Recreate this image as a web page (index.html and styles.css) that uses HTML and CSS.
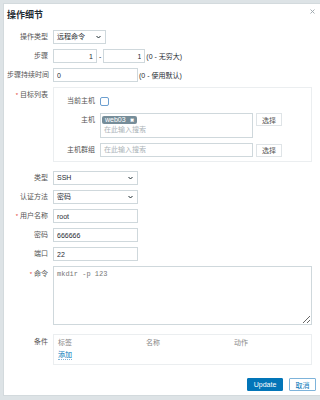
FILE: index.html
```html
<!DOCTYPE html>
<html lang="zh-CN">
<head>
    <meta charset="UTF-8">
    <meta name="viewport" content="width=device-width, initial-scale=1.0">
    <title>操作细节</title>
    <link rel="stylesheet" href="styles.css">
</head>
<body>

    <div class="dialog">
        <div class="dialog-head">
            <h4 class="dialog-title">操作细节</h4>
            <button class="btn-close" title="关闭">
                <svg width="5" height="5" viewBox="0 0 5 5"><path d="M0.5 0.5 L4.5 4.5 M4.5 0.5 L0.5 4.5" stroke="#9aa4aa" stroke-width="0.9"/></svg>
            </button>
        </div>

        <div class="form">
            <div class="row">
                <label class="label">操作类型</label>
                <div class="select w-op">远程命令
                    <svg class="chevron" width="5" height="4" viewBox="0 0 5 4"><path d="M0.5 1 L2.5 3 L4.5 1" fill="none" stroke="#1f2c33" stroke-width="1"/></svg>
                </div>
            </div>

            <div class="row">
                <label class="label">步骤</label>
                <input class="input w-step1 num" type="text" value="1">
                <span class="dash">-</span>
                <input class="input w-step2 num" type="text" value="1">
                <span class="hint">(0 - 无穷大)</span>
            </div>

            <div class="row">
                <label class="label">步骤持续时间</label>
                <input class="input w-std" type="text" value="0">
                <span class="hint">(0 - 使用默认)</span>
            </div>

            <div class="row row-top">
                <label class="label required">目标列表</label>
                <div class="targets">
                    <div class="sub-row">
                        <label class="sub-label">当前主机</label>
                        <span class="checkbox"></span>
                    </div>
                    <div class="sub-row sub-row-top">
                        <label class="sub-label">主机</label>
                        <div class="multiselect">
                            <span class="tag">web03 <b>✖</b></span>
                            <span class="placeholder">在此输入搜索</span>
                        </div>
                        <button class="btn-grey">选择</button>
                    </div>
                    <div class="sub-row">
                        <label class="sub-label">主机群组</label>
                        <div class="multiselect single">
                            <span class="placeholder">在此输入搜索</span>
                        </div>
                        <button class="btn-grey">选择</button>
                    </div>
                </div>
            </div>

            <div class="row">
                <label class="label">类型</label>
                <div class="select w-std">SSH
                    <svg class="chevron" width="5" height="4" viewBox="0 0 5 4"><path d="M0.5 1 L2.5 3 L4.5 1" fill="none" stroke="#1f2c33" stroke-width="1"/></svg>
                </div>
            </div>

            <div class="row">
                <label class="label">认证方法</label>
                <div class="select w-std">密码
                    <svg class="chevron" width="5" height="4" viewBox="0 0 5 4"><path d="M0.5 1 L2.5 3 L4.5 1" fill="none" stroke="#1f2c33" stroke-width="1"/></svg>
                </div>
            </div>

            <div class="row">
                <label class="label required">用户名称</label>
                <input class="input w-std" type="text" value="root">
            </div>

            <div class="row">
                <label class="label">密码</label>
                <input class="input w-std" type="text" value="666666">
            </div>

            <div class="row">
                <label class="label">端口</label>
                <input class="input w-std" type="text" value="22">
            </div>

            <div class="row row-top">
                <label class="label required">命令</label>
                <textarea class="command">mkdir -p 123</textarea>
            </div>

            <div class="row row-top row-cond">
                <label class="label">条件</label>
                <div class="conditions">
                    <div class="cond-head">
                        <span>标签</span>
                        <span>名称</span>
                        <span>动作</span>
                    </div>
                    <a class="link-add" href="#">添加</a>
                </div>
            </div>
        </div>

        <div class="dialog-foot">
            <button class="btn-primary">Update</button>
            <button class="btn-alt">取消</button>
        </div>
    </div>

</body>
</html>
```

FILE: styles.css
```css
* {
    box-sizing: border-box;
}

body {
    font-family: 'Liberation Sans', 'Noto Sans CJK SC', sans-serif;
    font-size: 7px;
    background-color: #dde3e6;
    color: #1f2c33;
    margin: 0;
    padding: 3px 0 0 3px;
    overflow: hidden;
}

.dialog {
    width: 317px;
    background-color: #fff;
    border: 1px solid #d3dadd;
    border-right: none;
}

.dialog-head {
    display: flex;
    justify-content: space-between;
    align-items: flex-start;
    height: 26px;
    padding: 6px 3px 0 3px;
}

.dialog-title {
    margin: 0;
    font-size: 9px;
    line-height: 10px;
    font-weight: bold;
    color: #1f2c33;
}

.btn-close {
    border: none;
    background: none;
    padding: 0;
    margin: -1px 2px 0 0;
    line-height: 0;
}

.form {
    display: flex;
    flex-direction: column;
    gap: 5px;
    padding: 0 8px 0 3px;
}

.row {
    display: flex;
    align-items: center;
    gap: 5px;
}

.row-top {
    align-items: flex-start;
}

.label {
    width: 41px;
    flex: none;
    text-align: right;
    color: #555;
    line-height: 14px;
    white-space: nowrap;
}

.row-top .label {
    margin-top: 1px;
}

.required::before {
    content: "*";
    color: #e33734;
    font-size: 6px;
    margin-right: 2px;
    vertical-align: top;
}

.input,
.select {
    height: 14px;
    border: 1px solid #cfd8dc;
    background: #fff;
    font-family: inherit;
    font-size: 7px;
    color: #1f2c33;
    padding: 0 3px;
    margin: 0;
    outline: none;
}

.num {
    text-align: right;
}

.select {
    display: flex;
    align-items: center;
    justify-content: space-between;
    line-height: 12px;
    padding-right: 4px;
}

.chevron {
    flex: none;
}

.w-op { width: 53px; }
.w-step1 { width: 44px; }
.w-step2 { width: 42px; }
.w-std { width: 85px; }

.dash {
    margin: 0 -3px;
    color: #1f2c33;
}

.hint {
    margin-left: -4px;
    color: #1f2c33;
    white-space: nowrap;
}

/* 目标列表 */
.targets {
    flex: 1;
    display: flex;
    flex-direction: column;
    gap: 5px;
    border: 1px solid #ebeef0;
    padding: 6px 0 4px 4px;
    margin-bottom: 4px;
}

.sub-row {
    display: flex;
    align-items: center;
    gap: 5px;
    height: 14px;
}

.sub-row-top {
    height: 25px;
    align-items: flex-start;
}

.sub-label {
    width: 37px;
    flex: none;
    text-align: right;
    color: #555;
    line-height: 14px;
    white-space: nowrap;
}

.checkbox {
    width: 9px;
    height: 9px;
    border: 1px solid #6c9fd0;
    border-radius: 2px;
}

.multiselect {
    width: 153px;
    height: 25px;
    border: 1px solid #cfd8dc;
    padding: 2px 2px 0 1px;
    display: flex;
    flex-direction: column;
    align-items: flex-start;
    gap: 1px;
}

.multiselect.single {
    height: 14px;
    padding: 0 3px;
    justify-content: center;
}

.tag {
    display: inline-block;
    height: 8px;
    line-height: 8px;
    padding: 0 3px;
    background-color: #768d99;
    color: #fff;
    border-radius: 2px;
    white-space: nowrap;
}

.tag b {
    font-size: 5px;
    margin-left: 2px;
}

.placeholder {
    color: #acb4b8;
    line-height: 10px;
    padding-left: 2px;
}

.multiselect.single .placeholder {
    padding-left: 0;
}

.btn-grey {
    width: 26px;
    height: 13px;
    margin-left: -2px;
    border: 1px solid #dfe4e7;
    background: #fff;
    color: #555;
    font-family: inherit;
    font-size: 7px;
    padding: 0;
}

/* 命令 */
.command {
    flex: 1;
    height: 59px;
    border: 1px solid #cfd8dc;
    font-family: 'Liberation Mono', 'DejaVu Sans Mono', monospace;
    font-size: 7px;
    line-height: 10px;
    color: #777;
    padding: 2px 3px;
    margin: 0;
    resize: both;
    outline: none;
}

.row-cond {
    margin-top: 4px;
}

.conditions {
    flex: 1;
    height: 31px;
    border: 1px solid #ebeef0;
    padding: 3px 4px;
}

.cond-head {
    display: grid;
    grid-template-columns: 88px 88px 1fr;
    color: #888;
    line-height: 10px;
}

.link-add {
    display: inline-block;
    margin-top: 2px;
    color: #0275b8;
    text-decoration: none;
    line-height: 9px;
    border-bottom: 1px dotted #7fb4d9;
}

.dialog-foot {
    display: flex;
    justify-content: flex-end;
    gap: 6px;
    padding: 13px 4px 4px 0;
}

.btn-primary,
.btn-alt {
    height: 13px;
    font-family: inherit;
    font-size: 7px;
    padding: 0;
    border-radius: 1px;
}

.btn-primary {
    width: 36px;
    background-color: #0275b8;
    border: 1px solid #0275b8;
    color: #fff;
}

.btn-alt {
    width: 27px;
    background-color: #fff;
    border: 1px solid #7db3da;
    color: #0275b8;
}
```
